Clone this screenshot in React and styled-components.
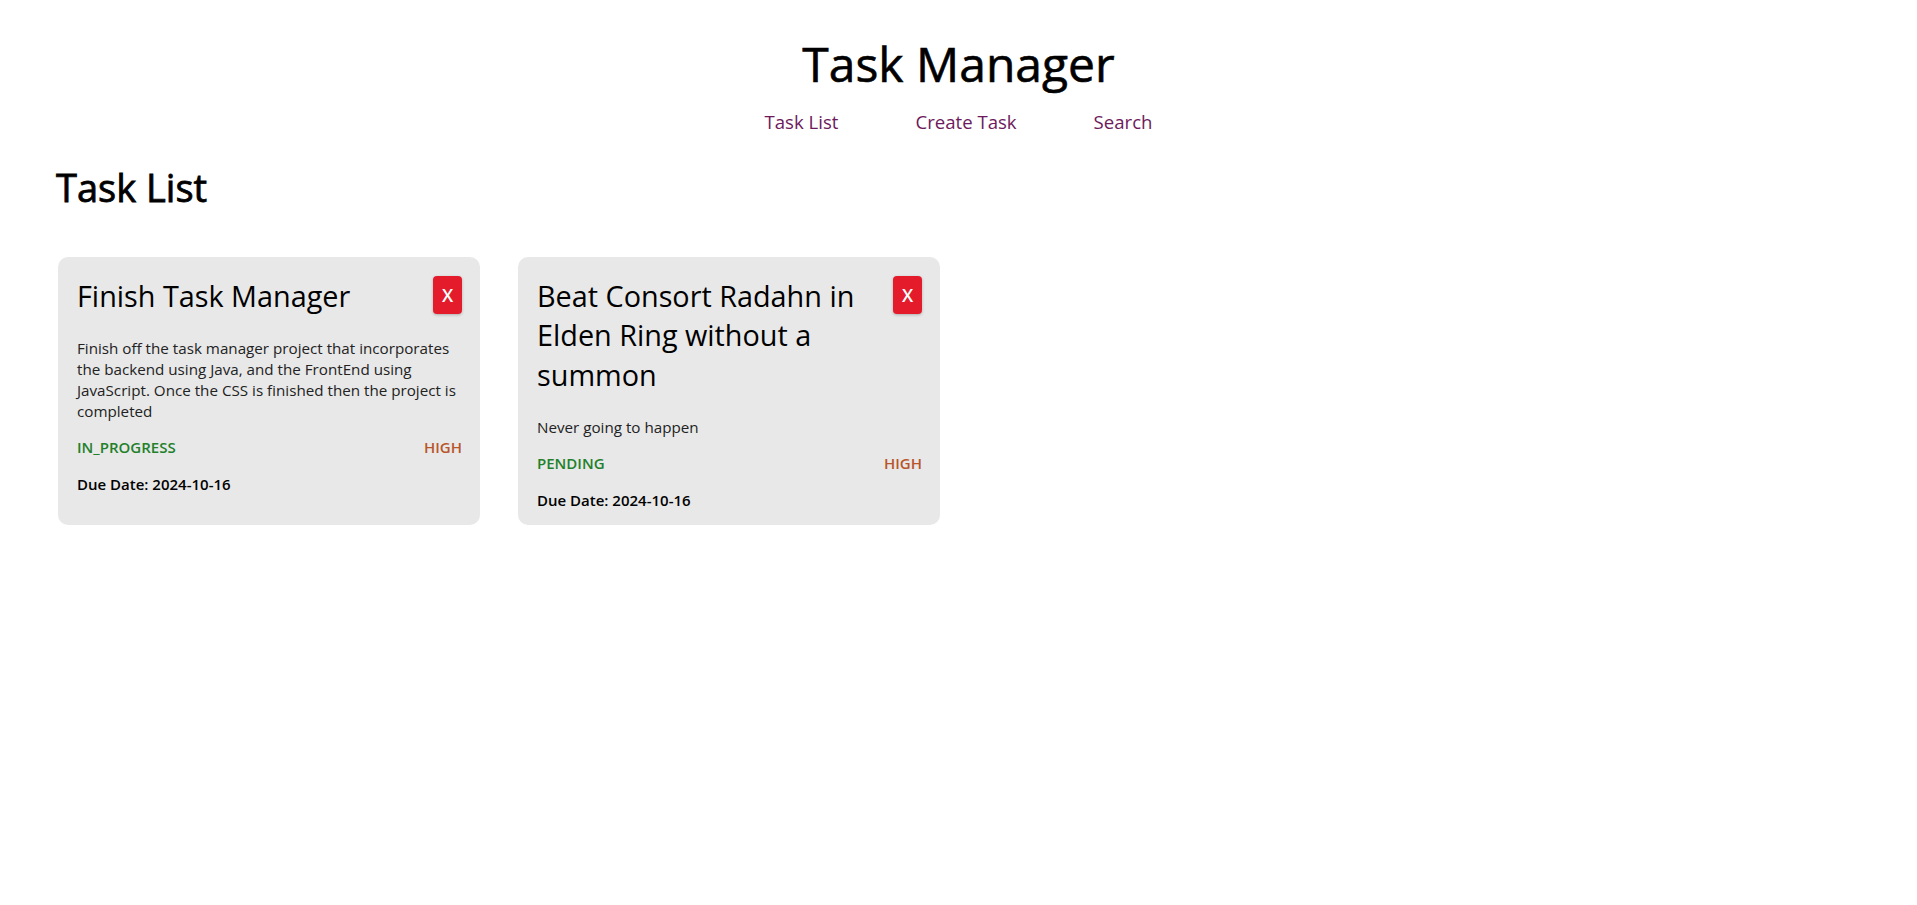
import React from 'react'
import styled, { createGlobalStyle } from 'styled-components'

const tasks = [
  {
    id: 1,
    title: 'Finish Task Manager',
    description:
      'Finish off the task manager project that incorporates the backend using Java, and the FrontEnd using JavaScript. Once the CSS is finished then the project is completed',
    status: 'IN_PROGRESS',
    priority: 'HIGH',
    dueDate: '2024-10-16',
  },
  {
    id: 2,
    title: 'Beat Consort Radahn in Elden Ring without a summon',
    description: 'Never going to happen',
    status: 'PENDING',
    priority: 'HIGH',
    dueDate: '2024-10-16',
  },
]

const App = () => {
  return (
    <>
      <GlobalStyle />
      <Header>
        <AppTitle>Task Manager</AppTitle>
        <Nav>
          <NavLink href="#">Task List</NavLink>
          <NavLink href="#">Create Task</NavLink>
          <NavLink href="#">Search</NavLink>
        </Nav>
      </Header>
      <Main>
        <PageTitle>Task List</PageTitle>
        <CardList>
          {tasks.map(task => (
            <Card key={task.id}>
              <CardTop>
                <CardTitle>{task.title}</CardTitle>
                <DeleteBtn>X</DeleteBtn>
              </CardTop>
              <Description>{task.description}</Description>
              <MetaRow>
                <Status>{task.status}</Status>
                <Priority>{task.priority}</Priority>
              </MetaRow>
              <DueDate>Due Date: {task.dueDate}</DueDate>
            </Card>
          ))}
        </CardList>
      </Main>
    </>
  )
}

export default App

const GlobalStyle = createGlobalStyle`
  body {
    margin: 0;
    background: #fff;
    font-family: 'Open Sans', 'Noto Sans', sans-serif;
    color: #000;
  }
`

const Header = styled.header`
  display: flex;
  flex-direction: column;
  align-items: center;
  padding-top: 31px;
`

const AppTitle = styled.h1`
  font-size: 48px;
  font-weight: 400;
  -webkit-text-stroke: 0.6px #000;
  margin: 0;
  line-height: 1.362;
`

const Nav = styled.nav`
  display: flex;
  gap: 77px;
  margin-top: 13px;
`

const NavLink = styled.a`
  font-size: 18.6px;
  color: #6d1a5c;
  text-decoration: none;
`

const Main = styled.main`
  padding: 0 56px;
`

const PageTitle = styled.h2`
  font-size: 38px;
  font-weight: 400;
  -webkit-text-stroke: 0.8px #000;
  margin: 28px 0 0;
  line-height: 1.362;
`

const CardList = styled.div`
  display: flex;
  align-items: stretch;
  gap: 38px;
  margin-top: 43px;
  padding-left: 2px;
`

const Card = styled.div`
  width: 422px;
  box-sizing: border-box;
  background: #e8e8e8;
  border-radius: 10px;
  padding: 19px 18px 14px 19px;
`

const CardTop = styled.div`
  display: flex;
  justify-content: space-between;
  align-items: flex-start;
  gap: 16px;
`

const CardTitle = styled.h3`
  font-size: 28.8px;
  font-weight: 400;
  line-height: 1.362;
  margin: 0;
`

const DeleteBtn = styled.button`
  flex-shrink: 0;
  width: 29px;
  height: 38px;
  padding: 0;
  border: none;
  border-radius: 4px;
  background: #e31b2b;
  color: #fff;
  font-family: 'Open Sans', sans-serif;
  font-size: 18px;
  font-weight: 600;
  box-shadow: 0 1px 3px rgba(0, 0, 0, 0.25);
  cursor: pointer;
`

const Description = styled.p`
  font-size: 15.2px;
  line-height: 21px;
  color: #222;
  margin: 23px 0 0;
`

const MetaRow = styled.div`
  display: flex;
  justify-content: space-between;
  margin-top: 15px;
  font-size: 15px;
  font-weight: 600;
  line-height: 21px;
`

const Status = styled.span`
  color: #22802a;
`

const Priority = styled.span`
  color: #b8552a;
`

const DueDate = styled.p`
  font-size: 15px;
  font-weight: 600;
  line-height: 21px;
  margin: 16px 0 0;
`
